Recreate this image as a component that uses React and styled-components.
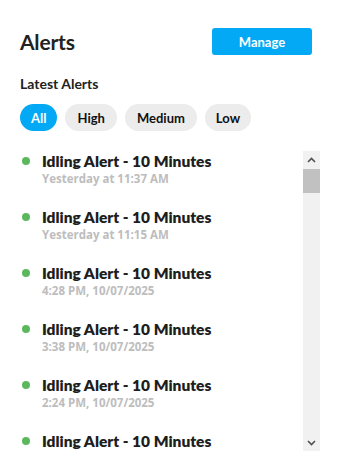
import React from "react";
import styled, { createGlobalStyle } from "styled-components";

const Global = createGlobalStyle`
  html, body { margin: 0; padding: 0; background: #fff; }
  body { font-family: Lato, "Open Sans", sans-serif; color: #222; }
  * { box-sizing: border-box; }
`;

const Page = styled.div`
  width: 339px;
  height: 470px;
  padding: 28px 19px 0 20px;
  display: flex;
  flex-direction: column;
`;

const Header = styled.div`
  display: flex;
  align-items: center;
  justify-content: space-between;
  padding-right: 8px;
`;

const Title = styled.h1`
  margin: 0;
  font-size: 21px;
  font-weight: 700;
  color: #222;
  letter-spacing: -0.2px;
`;

const ManageButton = styled.button`
  width: 100px;
  height: 27px;
  border: none;
  border-radius: 3px;
  background: #03a9f4;
  color: #fff;
  font-family: inherit;
  font-size: 13px;
  font-weight: 700;
  cursor: pointer;
`;

const SubTitle = styled.h2`
  margin: 20px 0 0;
  font-size: 14px;
  font-weight: 700;
  color: #222;
  line-height: 18px;
`;

const Pills = styled.div`
  display: flex;
  gap: 8px;
  margin-top: 11px;
`;

const Pill = styled.button`
  height: 27px;
  padding: 0 ${(p) => p.$pad}px;
  border: none;
  border-radius: 14px;
  background: ${(p) => (p.$active ? "#03a9f4" : "#ececec")};
  color: ${(p) => (p.$active ? "#fff" : "#111")};
  font-family: inherit;
  font-size: 13px;
  font-weight: 700;
`;

const ListArea = styled.div`
  margin-top: 20px;
  height: 300px;
  display: flex;
`;

const Viewport = styled.div`
  flex: 1;
  overflow: hidden;
  display: flex;
  flex-direction: column;
  gap: 20px;
`;

const ScrollBar = styled.div`
  width: 17px;
  flex-shrink: 0;
  background: #f1f1f1;
  display: flex;
  flex-direction: column;
`;

const ScrollButton = styled.div`
  height: 17px;
  display: flex;
  align-items: center;
  justify-content: center;
  color: #505050;
`;

const Thumb = styled.div`
  height: 24px;
  margin-top: 1px;
  background: #c1c1c1;
`;

const Track = styled.div`
  flex: 1;
`;

const Item = styled.div`
  display: flex;
  flex-direction: column;
  padding-left: 22px;
  position: relative;
  flex-shrink: 0;
`;

const Dot = styled.span`
  position: absolute;
  left: 2px;
  top: 6px;
  width: 8px;
  height: 8px;
  border-radius: 50%;
  background: #5cb85c;
`;

const ItemTitle = styled.div`
  font-size: 15.5px;
  font-weight: 800;
  line-height: 20px;
  color: #1e1e1e;
`;

const ItemTime = styled.div`
  font-family: "Open Sans", Lato, sans-serif;
  font-size: 11.5px;
  font-weight: 700;
  line-height: 16px;
  color: #bdbdbd;
`;

const Chevron = ({ up }) => (
  <svg width="9" height="6" viewBox="0 0 9 6">
    <path
      d={up ? "M1 5 L4.5 1.5 L8 5" : "M1 1 L4.5 4.5 L8 1"}
      fill="none"
      stroke="currentColor"
      strokeWidth="1.6"
    />
  </svg>
);

const times = [
  "Yesterday at 11:37 AM",
  "Yesterday at 11:15 AM",
  "4:28 PM, 10/07/2025",
  "3:38 PM, 10/07/2025",
  "2:24 PM, 10/07/2025",
  "1:52 PM, 10/07/2025",
];

export default function App() {
  return (
    <>
      <Global />
      <Page>
        <Header>
          <Title>Alerts</Title>
          <ManageButton>Manage</ManageButton>
        </Header>
        <SubTitle>Latest Alerts</SubTitle>
        <Pills>
          <Pill $active $pad={11}>All</Pill>
          <Pill $pad={12}>High</Pill>
          <Pill $pad={12}>Medium</Pill>
          <Pill $pad={11}>Low</Pill>
        </Pills>
        <ListArea>
          <Viewport>
            {times.map((t, i) => (
              <Item key={i}>
                <Dot />
                <ItemTitle>Idling Alert - 10 Minutes</ItemTitle>
                <ItemTime>{t}</ItemTime>
              </Item>
            ))}
          </Viewport>
          <ScrollBar>
            <ScrollButton>
              <Chevron up />
            </ScrollButton>
            <Thumb />
            <Track />
            <ScrollButton>
              <Chevron />
            </ScrollButton>
          </ScrollBar>
        </ListArea>
      </Page>
    </>
  );
}
